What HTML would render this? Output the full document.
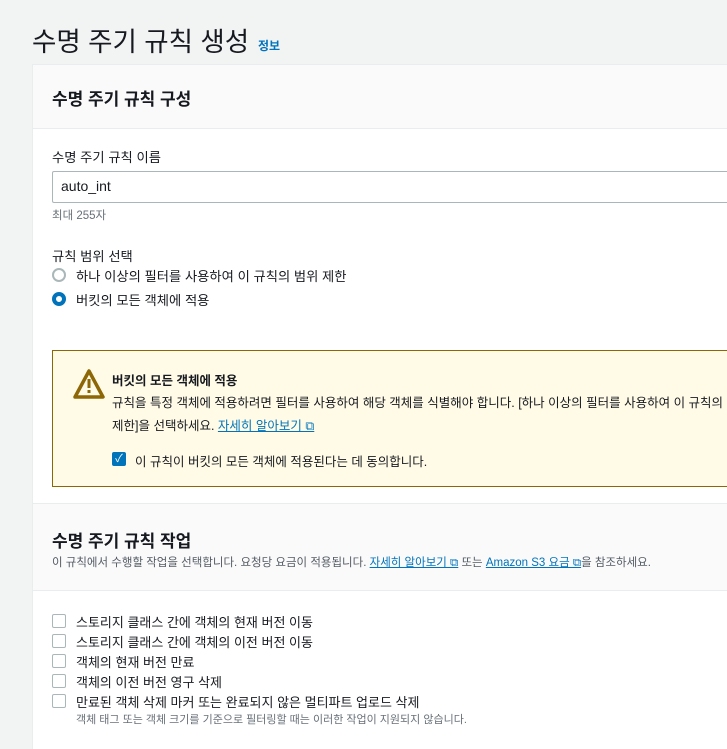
<!DOCTYPE html>
<html><head><meta charset="utf-8"><style>
*{box-sizing:border-box;margin:0;padding:0}
html,body{width:727px;height:749px;overflow:hidden}
body{background:#f2f3f3;font-family:"Liberation Sans","Noto Sans CJK KR",sans-serif;color:#16191f;position:relative}
.abs{position:absolute;white-space:nowrap}
.info{font-size:12px;color:#0073bb;font-weight:700;left:258px;top:37px}
.card{position:absolute;left:32px;top:64px;width:695px;height:700px;background:#fff;border-left:1px solid #eaeded;border-top:1px solid #eaeded}
.hdr{position:absolute;left:0;top:0;right:0;height:64px;background:#fafafa;border-bottom:1px solid #eaeded}
.hdr2{position:absolute;left:0;top:438px;right:0;height:88px;background:#fafafa;border-top:1px solid #eaeded;border-bottom:1px solid #eaeded}
.a{color:#0073bb;text-decoration:underline}
.input{position:absolute;left:52px;top:171px;width:675px;height:32px;border:1px solid #aab7b8;border-right:none;border-radius:2px 0 0 2px;font-size:14px;padding:6px 8px}
.radio{position:absolute;width:14px;height:14px;border-radius:50%;border:2px solid #aab7b8}
.cb{position:absolute;left:52px;width:14px;height:14px;border:1px solid #aab7b8;border-radius:2px}
.warn{position:absolute;left:52px;top:350px;width:675px;height:137px;background:#fffbe7;border:1px solid #8d6605;border-right:none}
.t14{font-size:13.3px}
</style></head><body>
<div class="abs" style="left:32px;top:20px;font-size:26.5px">수명 주기 규칙 생성</div>
<div class="abs info">정보</div>
<div class="card"><div class="hdr"></div><div class="hdr2"></div></div>
<div class="abs" style="left:52px;top:85px;font-size:17px;font-weight:700">수명 주기 규칙 구성</div>
<div class="abs t14" style="left:52px;top:147px">수명 주기 규칙 이름</div>
<div class="input">auto_int</div>
<div class="abs" style="left:52px;top:207px;font-size:11.5px;color:#687078">최대 255자</div>
<div class="abs t14" style="left:52px;top:246px">규칙 범위 선택</div>
<div class="radio" style="left:52px;top:268px"></div>
<div class="abs t14" style="left:76px;top:266px">하나 이상의 필터를 사용하여 이 규칙의 범위 제한</div>
<div class="radio" style="left:52px;top:292px;border:4px solid #0073bb"></div>
<div class="abs t14" style="left:76px;top:290px">버킷의 모든 객체에 적용</div>
<div class="warn"></div>
<svg class="abs" style="left:72px;top:368px" width="34" height="32" viewBox="0 0 34 32"><path d="M17 3 L31 29 H3 Z" fill="none" stroke="#8d6605" stroke-width="3.5" stroke-linejoin="round"/><rect x="15.5" y="11" width="3" height="9" fill="#8d6605"/><rect x="15.5" y="22" width="3" height="3" fill="#8d6605"/></svg>
<div class="abs" style="left:112px;top:370px;font-weight:700;font-size:12.5px">버킷의 모든 객체에 적용</div>
<div class="abs" style="left:112px;top:392px;font-size:12.5px">규칙을 특정 객체에 적용하려면 필터를 사용하여 해당 객체를 식별해야 합니다. [하나 이상의 필터를 사용하여 이 규칙의 범위</div>
<div class="abs" style="left:112px;top:415px;font-size:12.5px">제한]을 선택하세요. <span class="a">자세히 알아보기 ⧉</span></div>
<div class="cb" style="left:112px;top:452px;background:#0073bb;border-color:#0073bb;color:#fff;font-size:11px;line-height:12px;text-align:center">✓</div>
<div class="abs" style="left:135px;top:451px;font-size:12.5px">이 규칙이 버킷의 모든 객체에 적용된다는 데 동의합니다.</div>
<div class="abs" style="left:52px;top:527px;font-size:17px;font-weight:700">수명 주기 규칙 작업</div>
<div class="abs" style="left:52px;top:554px;font-size:11.5px;color:#545b64">이 규칙에서 수행할 작업을 선택합니다. 요청당 요금이 적용됩니다. <span class="a">자세히 알아보기 ⧉</span> 또는 <span class="a">Amazon S3 요금 ⧉</span>을 참조하세요.</div>
<div class="cb" style="top:614px"></div><div class="abs" style="left:76px;top:612px;font-size:13px">스토리지 클래스 간에 객체의 현재 버전 이동</div>
<div class="cb" style="top:634px"></div><div class="abs" style="left:76px;top:632px;font-size:13px">스토리지 클래스 간에 객체의 이전 버전 이동</div>
<div class="cb" style="top:654px"></div><div class="abs" style="left:76px;top:652px;font-size:13px">객체의 현재 버전 만료</div>
<div class="cb" style="top:674px"></div><div class="abs" style="left:76px;top:672px;font-size:13px">객체의 이전 버전 영구 삭제</div>
<div class="cb" style="top:694px"></div><div class="abs" style="left:76px;top:692px;font-size:13px">만료된 객체 삭제 마커 또는 완료되지 않은 멀티파트 업로드 삭제</div>
<div class="abs" style="left:76px;top:711px;font-size:11px;color:#687078">객체 태그 또는 객체 크기를 기준으로 필터링할 때는 이러한 작업이 지원되지 않습니다.</div>
</body></html>
